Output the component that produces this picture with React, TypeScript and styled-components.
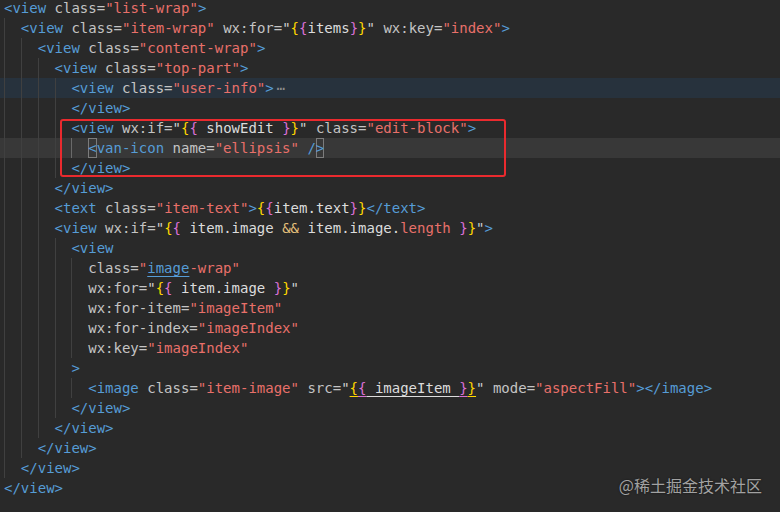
import React from "react";
import styled, { createGlobalStyle } from "styled-components";

const Global = createGlobalStyle`
  html, body { margin: 0; padding: 0; background: #292929; }
  body { width: 780px; height: 512px; overflow: hidden; }
`;

const COLORS: Record<string, string> = {
  p: "#569cd6",
  t: "#569cd6",
  a: "#c4c4c4",
  s: "#e8706a",
  q: "#d0d0d0",
  v: "#dcdcdc",
  y: "#ffd700",
  m: "#da70d6",
  o: "#e5c07b",
  l: "#569cd6",
  f: "#8c8c8c",
};

const Editor = styled.div`
  position: relative;
  width: 780px;
  height: 512px;
  overflow: hidden;
  background: #292929;
  font-family: "DejaVu Sans Mono", "Liberation Mono", monospace;
  font-size: 14px;
`;

const Lines = styled.div`
  display: flex;
  flex-direction: column;
  margin-top: -2px;
`;

const Line = styled.div<{ $bg?: "fold" | "cur" }>`
  display: flex;
  align-items: stretch;
  height: 20px;
  line-height: 20px;
  padding-left: 4px;
  white-space: pre;
  background: ${(p) =>
    p.$bg === "fold" ? "#27323d" : p.$bg === "cur" ? "#383838" : "transparent"};
`;

const Guide = styled.span<{ $active?: boolean }>`
  flex: none;
  width: 2ch;
  height: 20px;
  box-sizing: border-box;
  border-left: 1px solid ${(p) => (p.$active ? "#6a6a6a" : "#404040")};
`;

const Code = styled.span`
  flex: none;
  white-space: pre;
`;

const Tok = styled.span<{ $c: string; $u?: boolean; $box?: boolean; $fold?: boolean }>`
  color: ${(p) => p.$c};
  text-decoration: ${(p) => (p.$u ? "underline" : "none")};
  text-underline-offset: 3px;
  ${(p) =>
    p.$box
      ? `display: inline-block; height: 20px; vertical-align: top; box-shadow: inset 0 0 0 1px #7c7c7c;`
      : ""}
  ${(p) => (p.$fold ? `margin-left: 3px; letter-spacing: 0;` : "")}
`;

const Highlight = styled.div`
  position: absolute;
  left: 60px;
  top: 119px;
  width: 446px;
  height: 58px;
  box-sizing: border-box;
  border: 2px solid #ea2a2e;
  border-radius: 3px;
  pointer-events: none;
`;

const Watermark = styled.div`
  position: absolute;
  right: 18px;
  top: 474px;
  font-family: "Noto Sans CJK SC", "Noto Sans", sans-serif;
  font-size: 16px;
  line-height: 22px;
  color: #a2a2a2;
  text-shadow: 0 0 2px rgba(0, 0, 0, 0.6);
`;

type T = [string, string];
type LineData = { indent: number; bg?: "fold" | "cur"; toks: T[] };

const open = (tag: string): T[] => [["p", "<"], ["t", tag]];
const close = (tag: string): T[] => [["p", "</"], ["t", tag], ["p", ">"]];

const lines: LineData[] = [
  { indent: 0, toks: [...open("view"), ["a", " class="], ["s", '"list-wrap"'], ["p", ">"]] },
  {
    indent: 2,
    toks: [
      ...open("view"), ["a", " class="], ["s", '"item-wrap"'], ["a", " wx:for="], ["q", '"'],
      ["y", "{"], ["m", "{"], ["v", "items"], ["m", "}"], ["y", "}"], ["q", '"'],
      ["a", " wx:key="], ["s", '"index"'], ["p", ">"],
    ],
  },
  { indent: 4, toks: [...open("view"), ["a", " class="], ["s", '"content-wrap"'], ["p", ">"]] },
  { indent: 6, toks: [...open("view"), ["a", " class="], ["s", '"top-part"'], ["p", ">"]] },
  { indent: 8, bg: "fold", toks: [...open("view"), ["a", " class="], ["s", '"user-info"'], ["p", ">"], ["f", "⋯"]] },
  { indent: 8, toks: close("view") },
  {
    indent: 8,
    toks: [
      ...open("view"), ["a", " wx:if="], ["q", '"'], ["y", "{"], ["m", "{"], ["v", " showEdit "],
      ["m", "}"], ["y", "}"], ["q", '"'], ["a", " class="], ["s", '"edit-block"'], ["p", ">"],
    ],
  },
  {
    indent: 10,
    bg: "cur",
    toks: [["pb", "<"], ["t", "van-icon"], ["a", " name="], ["s", '"ellipsis"'], ["p", " /"], ["pb", ">"]],
  },
  { indent: 8, toks: close("view") },
  { indent: 6, toks: close("view") },
  {
    indent: 6,
    toks: [
      ...open("text"), ["a", " class="], ["s", '"item-text"'], ["p", ">"], ["y", "{"], ["m", "{"],
      ["v", "item.text"], ["m", "}"], ["y", "}"], ...close("text"),
    ],
  },
  {
    indent: 6,
    toks: [
      ...open("view"), ["a", " wx:if="], ["q", '"'], ["y", "{"], ["m", "{"], ["v", " item.image "],
      ["o", "&&"], ["v", " item.image."], ["s", "length"], ["v", " "], ["m", "}"], ["y", "}"],
      ["q", '"'], ["p", ">"],
    ],
  },
  { indent: 8, toks: open("view") },
  { indent: 10, toks: [["a", "class="], ["s", '"'], ["lu", "image"], ["s", '-wrap"']] },
  {
    indent: 10,
    toks: [
      ["a", "wx:for="], ["q", '"'], ["y", "{"], ["m", "{"], ["v", " item.image "], ["m", "}"],
      ["y", "}"], ["q", '"'],
    ],
  },
  { indent: 10, toks: [["a", "wx:for-item="], ["s", '"imageItem"']] },
  { indent: 10, toks: [["a", "wx:for-index="], ["s", '"imageIndex"']] },
  { indent: 10, toks: [["a", "wx:key="], ["s", '"imageIndex"']] },
  { indent: 8, toks: [["p", ">"]] },
  {
    indent: 10,
    toks: [
      ...open("image"), ["a", " class="], ["s", '"item-image"'], ["a", " src="], ["q", '"'],
      ["yu", "{"], ["mu", "{"], ["vu", " imageItem "], ["mu", "}"], ["yu", "}"], ["q", '"'],
      ["a", " mode="], ["s", '"aspectFill"'], ["p", "></"], ["t", "image"], ["p", ">"],
    ],
  },
  { indent: 8, toks: close("view") },
  { indent: 6, toks: close("view") },
  { indent: 4, toks: close("view") },
  { indent: 2, toks: close("view") },
  { indent: 0, toks: close("view") },
];

function renderTok([kind, text]: T, i: number) {
  const base = kind[0];
  const u = kind.endsWith("u");
  const box = kind === "pb";
  return (
    <Tok key={i} $c={COLORS[base]} $u={u} $box={box} $fold={kind === "f"}>
      {text}
    </Tok>
  );
}

export default function App() {
  return (
    <>
      <Global />
      <Editor>
        <Lines>
          {lines.map((ln, idx) => (
            <Line key={idx} $bg={ln.bg}>
              {Array.from({ length: ln.indent / 2 }).map((_, g) => (
                <Guide key={g} $active={idx === 7 && g === 4} />
              ))}
              <Code>{ln.toks.map(renderTok)}</Code>
            </Line>
          ))}
        </Lines>
        <Highlight />
        <Watermark>@稀土掘金技术社区</Watermark>
      </Editor>
    </>
  );
}
